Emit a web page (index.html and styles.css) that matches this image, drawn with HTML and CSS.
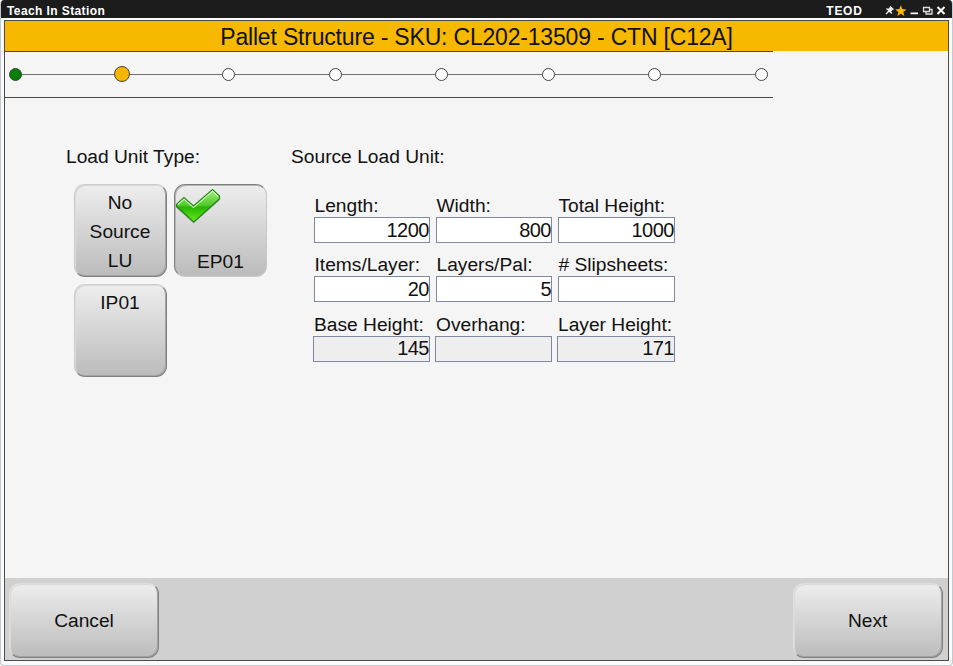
FILE: index.html
```html
<!DOCTYPE html>
<html lang="en">
<head>
<meta charset="utf-8">
<title>Teach In Station</title>
<link rel="stylesheet" href="styles.css">
</head>
<body>
<div class="window">
  <header class="titlebar">
    <span class="app-name">Teach In Station</span>
    <span class="user">TEOD</span>
    <svg class="window-icons" width="66" height="18" viewBox="0 0 66 18">
      <path d="M8 6.500l3.500 3M10.500 8.500L7 12M4.500 8.500l5.500 5M7 11l-3 3" fill="none" stroke="#eee" stroke-width="1.300"/><path d="M8 7l3 2.500-2.500 3-3-3z" fill="#eee"/>
      <path d="M18.800 5.300l1.600 3.800 4.100.3-3.200 2.500 1.100 4-3.600-2.200-3.500 2.200 1.100-4-3.200-2.500 4.100-.3z" fill="#f7b500"/>
      <path d="M28.500 12.500h7.500v1.700h-7.500z" fill="#fff"/>
      <path d="M41.500 7.500h6v4h-6zM44 11.500v2.500h6v-4.500H47.500" fill="none" stroke="#ddd" stroke-width="1.300"/>
      <path d="M55.500 7l7 7M62.500 7l-7 7" stroke="#fff" stroke-width="2"/>
    </svg>
  </header>
  <main class="screen">
    <h1 class="heading"><span>Pallet Structure - SKU: CL202-13509 - CTN [C12A]</span></h1>
    <ol class="steps">
      <li class="step done"></li><li class="step current"></li><li class="step"></li><li class="step"></li>
      <li class="step"></li><li class="step"></li><li class="step"></li><li class="step"></li>
    </ol>
    <div class="content">
      <section class="types">
        <h2>Load Unit Type:</h2>
        <div class="tiles">
          <button class="button tile">No<br>Source<br>LU</button>
          <button class="button tile selected">
            <svg class="check" width="46" height="38" viewBox="0 0 46 38">
              <defs><linearGradient id="green" x1="0" y1="0" x2="0" y2="1"><stop offset="0" stop-color="#a2ef7c"/><stop offset=".48" stop-color="#55c92e"/><stop offset=".55" stop-color="#27b500"/><stop offset="1" stop-color="#66ec20"/></linearGradient></defs>
              <path d="M1.500 19.500L9 12.500 18.500 20.500 37.500 4.500 44.500 11V14.500L18.500 37.500 1.500 22z" fill="#6d806a" opacity=".55"/>
              <path d="M1.500 18.500L9 11.500 18.500 20 37.500 3.500 44.500 10V13L18.800 36 1.500 20.500z" fill="url(#green)" stroke="#218512" stroke-width="1.200"/>
              <path d="M3 18.500L9 13.200 18.500 21.600 37.500 5.200 43 10.300" fill="none" stroke="#d2ffc0" stroke-width="1.100"/>
            </svg>
            <span>EP01</span>
          </button>
          <button class="button tile">IP01</button>
        </div>
      </section>
      <section class="source">
        <h2>Source Load Unit:</h2>
        <div class="fields">
          <label class="field">Length:<input value="1200"></label>
          <label class="field">Width:<input value="800"></label>
          <label class="field">Total Height:<input value="1000"></label>
          <label class="field">Items/Layer:<input value="20"></label>
          <label class="field">Layers/Pal:<input value="5"></label>
          <label class="field"># Slipsheets:<input value=""></label>
          <label class="field fixed">Base Height:<input value="145" readonly></label>
          <label class="field fixed">Overhang:<input value="" readonly></label>
          <label class="field fixed">Layer Height:<input value="171" readonly></label>
        </div>
      </section>
    </div>
    <footer class="actions">
      <button class="button action">Cancel</button>
      <button class="button action">Next</button>
    </footer>
  </main>
</div>
</body>
</html>
```
FILE: styles.css
```css
* { box-sizing: border-box; }
body {
  margin: 0;
  background: #fff;
  font: 19.2px/22px "Liberation Sans", Arial, sans-serif;
  color: #111;
}
.window {
  height: 666px;
  display: flex;
  flex-direction: column;
  padding: 0 3px 4px 4px;
  background: #fafafa;
  border: solid #c0cad3;
  border-width: 0 1px 1px;
  border-radius: 4px;
  overflow: hidden;
}
.titlebar {
  height: 18px;
  margin: 0 -4px 2px -5px;
  padding: 0 5px 0 7px;
  display: flex;
  align-items: center;
  background: #1c1c1c;
  color: #fff;
  font-size: 12px;
  font-weight: bold;
  line-height: 18px;
}
.app-name, .user { padding-top: 4px; }
.app-name { flex: 1; letter-spacing: .4px; }
.user { margin-right: 19.500px; letter-spacing: .7px; }
.window-icons { display: block; }
.screen {
  flex: 1;
  margin-left: -1px;
  display: flex;
  flex-direction: column;
  border: 1px solid #4d4d4f;
  background: #f5f5f5;
}
.heading {
  height: 30px;
  margin: 0;
  background: #f7b900;
  text-align: center;
  font-size: 23px;
  letter-spacing: -.19px;
  font-weight: normal;
  line-height: 33px;
  white-space: nowrap;
}
.steps {
  width: 768px;
  height: 47px;
  margin: 0;
  padding: 0 5px 0 4px;
  display: flex;
  align-items: center;
  justify-content: space-between;
  list-style: none;
  border: solid #4a4a4a;
  border-width: 1px 0;
  background: linear-gradient(#707070, #707070) 10px 22px / 747px 1px no-repeat;
}
.step {
  width: 13px;
  height: 13px;
  border: 1px solid #444;
  border-radius: 50%;
  background: #fff;
}
.done { background: #008200; }
.current { width: 16px; height: 16px; margin: -1px -1.500px 0; background: #f7b500; }
.content { flex: 1; display: flex; padding: 48px 0 0 61px; }
h2 { margin: 0; font-size: 19.2px; font-weight: normal; line-height: 22px; white-space: nowrap; }
.types { width: 225px; }
.tiles { display: grid; grid-template-columns: 93px 93px; gap: 7.500px; padding: 15.500px 0 0 7.500px; }
.button {
  padding: 0;
  border: 1px solid;
  border-color: #cdcdcd #808080 #808080 #cdcdcd;
  border-radius: 11px;
  background: linear-gradient(#eee, #bbb) border-box;
  box-shadow: inset -1px -1px 0 #a3a3a3, inset 1px 1px 0 #dadada;
  color: #111;
  font: inherit;
}
.tile {
  height: 93px;
  position: relative;
  display: block;
  line-height: 29px;
}
.tile:not(.selected) { display: flex; justify-content: center; padding-top: 3px; }
.selected {
  border-color: #808080 #c8c8c8 #c8c8c8 #808080;
  box-shadow: inset 1px 1px 0 #b5b5b5;
  padding-top: 62.500px;
}
.check { position: absolute; left: 0; top: 1px; }
.fields {
  display: grid;
  grid-template-columns: 117px 117px 118px;
  gap: 7.800px 5px;
  padding: 26px 0 0 22px;
}
.field { display: flex; flex-direction: column; height: 51.500px; padding-left: 1.500px; line-height: 24px; white-space: nowrap; }
input {
  width: calc(100% + 1px);
  height: 26px;
  margin: -1px 0 0 -1px;
  padding: 0;
  border: 1px solid #8189a1;
  border-radius: 0;
  background: #fff;
  color: #111;
  font: inherit;
  font-size: 20px;
  letter-spacing: -.5px;
  text-align: right;
  outline: none;
}
.fixed { padding-left: 1px; }
.fixed input { background: #eee; }
.actions {
  height: 82px;
  padding: 5px 5.400px 2px 4px;
  display: flex;
  justify-content: space-between;
  background: #d0d0d0;
}
.action { width: 150px; height: 75px; border-color: #dedede #808080 #808080 #dedede; }
```
